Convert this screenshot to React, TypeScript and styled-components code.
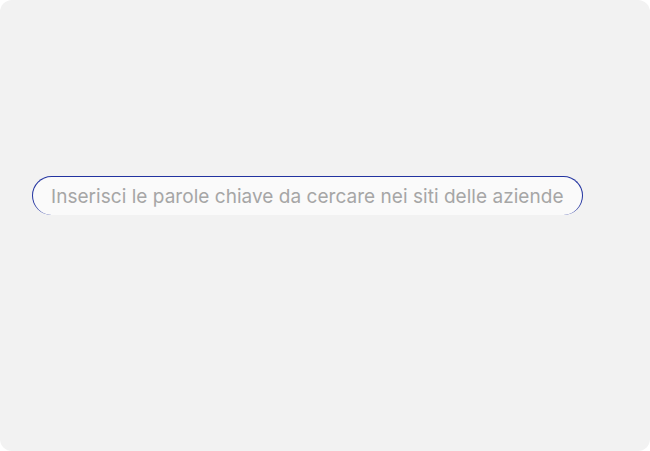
import React from "react";
import styled, { createGlobalStyle } from "styled-components";

const Global = createGlobalStyle`
  html, body { margin: 0; padding: 0; background: #ffffff; }
  #root { width: 650px; height: 451px; }
`;

const Page = styled.div`
  width: 650px;
  height: 451px;
  box-sizing: border-box;
  background: #f2f2f2;
  border-radius: 12px;
  display: flex;
  align-items: flex-start;
  padding: 176px 67px 0 32px;
`;

const SearchInput = styled.input`
  width: 551px;
  height: 39px;
  box-sizing: border-box;
  border-radius: 20px;
  border-style: solid;
  border-color: #2233a0;
  border-width: 1px 0.6px 0 0.6px;
  background: #fafafa;
  padding: 0 0 0 18px;
  font-family: Inter, "Noto Sans", sans-serif;
  font-size: 19px;
  letter-spacing: 0.035px;
  color: #333;
  outline: none;
  &::placeholder { color: #a6a6a6; }
`;

export default function App() {
  return (
    <>
      <Global />
      <Page>
        <SearchInput placeholder="Inserisci le parole chiave da cercare nei siti delle aziende" />
      </Page>
    </>
  );
}
